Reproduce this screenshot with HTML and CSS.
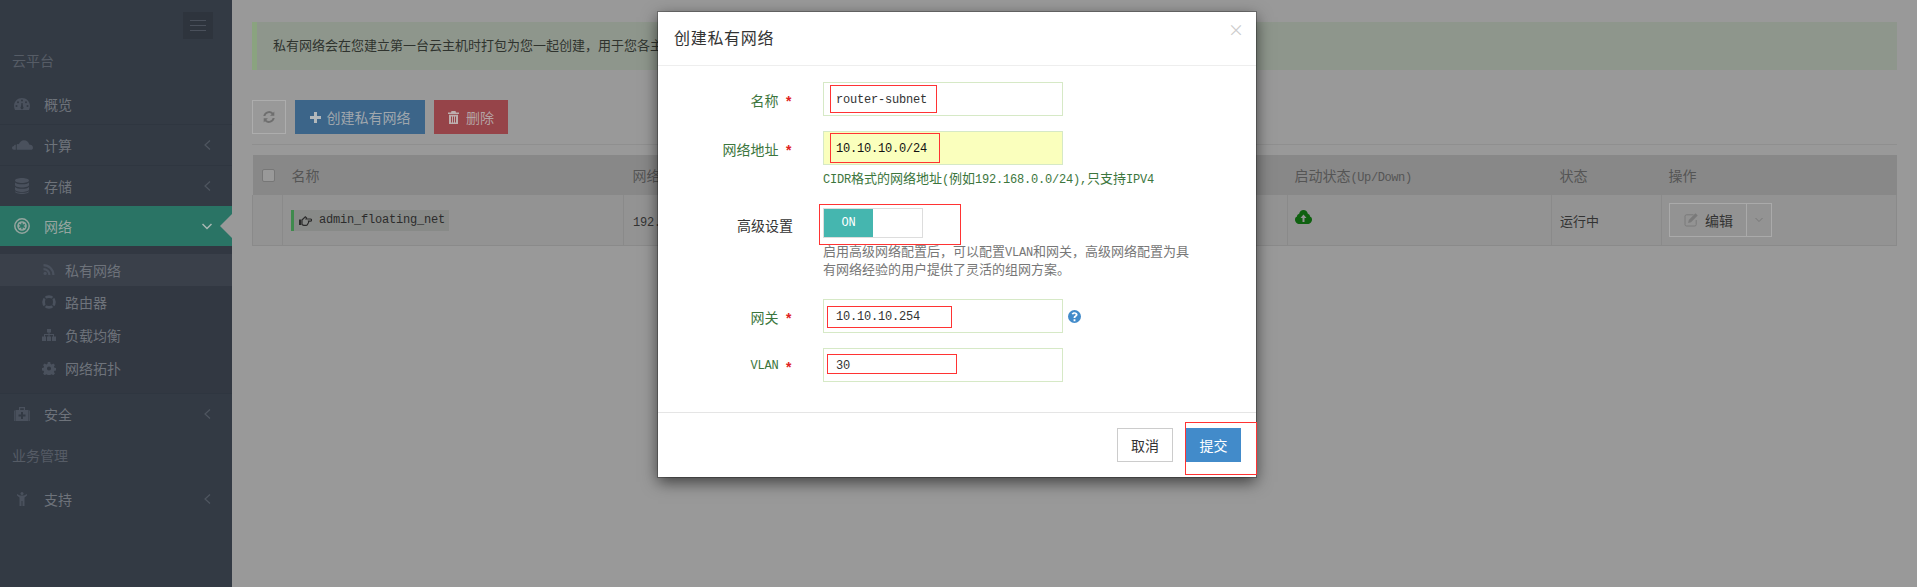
FILE: index.html
```html
<!DOCTYPE html>
<html lang="zh-CN">
<head>
<meta charset="UTF-8">
<meta name="viewport" content="width=device-width, initial-scale=1.0">
<title>创建私有网络</title>
<link rel="stylesheet" href="styles.css">
</head>
<body>

<svg class="defs" width="0" height="0">
  <symbol id="i-dash" viewBox="0 0 16 12"><path fill-rule="evenodd" d="M8 0C3.6 0 0 3.4 0 7.8c0 1.5.4 2.9 1 4.2h14c.6-1.3 1-2.700 1-4.200C16 3.400 12.400 0 8 0zM8 1.500a1 1 0 1 1 0 2 1 1 0 0 1 0-2zM4 3.200a1 1 0 1 1 0 2 1 1 0 0 1 0-2zM12 3.200a1 1 0 1 1 0 2 1 1 0 0 1 0-2zM2.500 7a1 1 0 1 1 0 2 1 1 0 0 1 0-2zM13.500 7a1 1 0 1 1 0 2 1 1 0 0 1 0-2zM7.400 5h1.200l.4 3.500a1.500 1.500 0 1 1-2 0z"/></symbol>
  <symbol id="i-cloud" viewBox="0 0 22 10"><path d="M2 10C.8 10 0 9.200 0 8s.8-2 2-2c.3-1 1-1.500 2-1.300V10zM5 10V4.500c.8-.6 1.500-.6 2.200-.2C8 1.800 10 0 12.500 0c3 0 5 2 5.500 4.500 2 0 4 1.200 4 3.300 0 1.400-1 2.200-2 2.200z"/></symbol>
  <symbol id="i-db" viewBox="0 0 14 16"><path d="M7 0C3.100 0 0 1 0 2.500S3.100 5 7 5s7-1 7-2.500S10.900 0 7 0zM0 4.500V7c0 1.500 3.100 2.500 7 2.500S14 8.500 14 7V4.500C13 5.800 10 6.300 7 6.300S1 5.800 0 4.500zM0 9v2.500C0 13 3.100 14 7 14s7-1 7-2.500V9c-1 1.300-4 1.800-7 1.800S1 10.300 0 9zM0 13.200v.3C0 15 3.100 16 7 16s7-1 7-2.500v-.3c-1.200 1-4 1.500-7 1.500s-5.800-.5-7-1.500z"/></symbol>
  <symbol id="i-net" viewBox="0 0 16 16"><circle cx="8" cy="8" r="7.200" fill="none" stroke="currentColor" stroke-width="1.500"/><circle cx="8" cy="8" r="4.800"/><path d="M8 4.800v6.400M5.200 6.400l5.600 3.200M10.800 6.400L5.200 9.600" stroke="#2a7465" stroke-width="1.400"/></symbol>
  <symbol id="i-rss" viewBox="0 0 11 11"><circle cx="1.600" cy="9.400" r="1.600"/><path d="M0 4v2.200A4.800 4.800 0 0 1 4.800 11H7A7 7 0 0 0 0 4zM0 0v2.200A8.800 8.800 0 0 1 8.800 11H11A11 11 0 0 0 0 0z"/></symbol>
  <symbol id="i-ring" viewBox="0 0 14 14"><circle cx="7" cy="7" r="5.400" fill="none" stroke="currentColor" stroke-width="2.800"/><path d="M1.500 1.500l3 3M12.500 1.500l-3 3M1.500 12.500l3-3M12.500 12.500l-3-3" stroke="#333a44" stroke-width="1.300"/></symbol>
  <symbol id="i-map" viewBox="0 0 14 12"><path d="M5 0h4v3.500H7.500v1.500H12v2.500h2V12h-4V7.500h1V6H7.500v1.500H9V12H5V7.500h1.500V6H3v1.500h1V12H0V7.500h2V5h4.500V3.500H5z"/></symbol>
  <symbol id="i-cog" viewBox="0 0 14 14"><path fill-rule="evenodd" d="M5.700 0h2.600l.3 2 1.300.6 1.700-1.100 1.800 1.800-1.100 1.700.6 1.300 2 .3v2.600l-2 .3-.6 1.300 1.100 1.700-1.800 1.800-1.700-1.100-1.300.6-.3 2H5.700l-.3-2-1.300-.6-1.700 1.100L.6 12.500l1.100-1.700-.6-1.300-2-.3V6.600l2-.3.6-1.300L.6 3.300l1.800-1.800 1.700 1.100 1.300-.6zM7 4.800a2.200 2.200 0 1 0 0 4.400 2.200 2.200 0 0 0 0-4.400z"/></symbol>
  <symbol id="i-med" viewBox="0 0 16 14"><path fill-rule="evenodd" d="M5 0h6v3h3.500v11h-13V3H5zM6.200 1.200V3h3.600V1.200zM7 5v2.500H4.500v2H7V12h2V9.500h2.500v-2H9V5zM0 3.500h.8V14H0zM15.200 3.500h.8V14h-.8z"/></symbol>
  <symbol id="i-man" viewBox="0 0 10 14"><circle cx="5" cy="1.500" r="1.500"/><path d="M0 2l3 1.500h4L10 2v1.500L7.500 5.500V14H5.500V9h-1v5H2.500V5.500L0 3.500z"/></symbol>
  <symbol id="i-sync" viewBox="0 0 14 14"><path d="M12.300 1.500v4.200H8.100l1.600-1.600A3.900 3.900 0 0 0 3.300 6H1.300a5.900 5.900 0 0 1 9.800-3.300zM1.700 12.500V8.300h4.200l-1.600 1.600A3.900 3.900 0 0 0 10.700 8h2a5.900 5.900 0 0 1-9.800 3.300z"/></symbol>
  <symbol id="i-plus" viewBox="0 0 11 11"><path d="M4 0h3v4h4v3H7v4H4V7H0V4h4z"/></symbol>
  <symbol id="i-trash" viewBox="0 0 11 13"><path fill-rule="evenodd" d="M3.500 0h4L8 1.500h3V3H0V1.500h3zM1 3.800h9V13H1zM3 5.500v6h1v-6zM5 5.500v6h1v-6zM7 5.500v6h1v-6z"/></symbol>
  <symbol id="i-hand" viewBox="0 0 13 11"><rect x="0" y="4.500" width="2.200" height="5.500"/><path d="M3 5l3.300-3.200 1.200 1.100L7 4h4.500a1.100 1.100 0 0 1 0 2.200h-2c.3 1-.1 2-.6 2.500-.2 1-.8 1.600-1.500 1.600H5c-1 0-1.500-.5-2-1z" fill="none" stroke="currentColor" stroke-width="1.200"/></symbol>
  <symbol id="i-up" viewBox="0 0 17 14"><path fill-rule="evenodd" d="M8.500 0C6.300 0 4.500 1.600 4.200 3.700 2.800 4 2 5.200 2 6.500c-1.200.4-2 1.500-2 2.900C0 11.900 2 14 4.500 14h8c2.500 0 4.500-2.100 4.500-4.600 0-1.400-.8-2.500-2-2.900 0-1.300-.8-2.500-2.200-2.800C12.500 1.600 10.700 0 8.500 0zM8.500 4.500l3 3.500H9.500v4h-2V8h-2z"/></symbol>
  <symbol id="i-edit" viewBox="0 0 14 14"><path d="M9.500 1.800H2.500A1.500 1.500 0 0 0 1 3.300v8.200A1.500 1.500 0 0 0 2.500 13h8.200a1.500 1.500 0 0 0 1.500-1.500V7" fill="none" stroke="currentColor"/><path d="M11.500.3l2.200 2.200-6.700 6.700-2.900.7.700-2.900z"/></symbol>
  <symbol id="i-help" viewBox="0 0 14 14"><path fill-rule="evenodd" d="M7 0a7 7 0 1 0 0 14A7 7 0 0 0 7 0zM6 10h2v2H6zM7 2.300c2 0 3.300 1.100 3.300 2.600 0 1.100-.6 1.700-1.300 2.200-.6.400-1 .7-1 1.400H6c0-1.300.6-1.900 1.300-2.400.5-.4.900-.6.900-1.100s-.5-.9-1.200-.9-1.300.4-1.600 1L3.800 3.900C4.400 3 5.500 2.300 7 2.300z"/></symbol>
</svg>

<div class="page">
  <aside class="sidebar">
    <div class="top-row"><button class="menu-btn"><i></i><i></i><i></i></button></div>
    <div class="sec-title">云平台</div>
    <div class="nav-item line"><svg class="ico" width="16" height="12"><use href="#i-dash"/></svg>概览</div>
    <div class="nav-item line"><svg class="ico wide" width="21" height="10"><use href="#i-cloud"/></svg>计算<svg class="chev" width="7" height="10"><polyline points="6,0.500 1,5 6,9.500"/></svg></div>
    <div class="nav-item"><svg class="ico" width="14" height="16"><use href="#i-db"/></svg>存储<svg class="chev" width="7" height="10"><polyline points="6,0.500 1,5 6,9.500"/></svg></div>
    <div class="nav-item active"><svg class="ico" width="16" height="16"><use href="#i-net"/></svg>网络<svg class="chev" width="10" height="7"><polyline points="0.500,1 5,5.500 9.500,1"/></svg><span class="arrow"></span></div>
    <div class="submenu">
      <div class="sub-item current"><svg class="sub-ico" width="11" height="11"><use href="#i-rss"/></svg>私有网络</div>
      <div class="sub-item"><svg class="sub-ico" width="14" height="14"><use href="#i-ring"/></svg>路由器</div>
      <div class="sub-item"><svg class="sub-ico" width="14" height="12"><use href="#i-map"/></svg>负载均衡</div>
      <div class="sub-item"><svg class="sub-ico" width="13" height="13"><use href="#i-cog"/></svg>网络拓扑</div>
    </div>
    <div class="nav-item top-line"><svg class="ico" width="16" height="14"><use href="#i-med"/></svg>安全<svg class="chev" width="7" height="10"><polyline points="6,0.500 1,5 6,9.500"/></svg></div>
    <div class="sec-title">业务管理</div>
    <div class="nav-item"><svg class="ico" width="10" height="14"><use href="#i-man"/></svg>支持<svg class="chev" width="7" height="10"><polyline points="6,0.500 1,5 6,9.500"/></svg></div>
  </aside>

  <main class="content">
    <div class="alert">私有网络会在您建立第一台云主机时打包为您一起创建&#xFF0C;用于您各主</div>
    <div class="toolbar">
      <button class="btn btn-plain"><svg width="14" height="14"><use href="#i-sync"/></svg></button>
      <button class="btn btn-blue"><svg width="11" height="11"><use href="#i-plus"/></svg>创建私有网络</button>
      <button class="btn btn-red"><svg width="11" height="13"><use href="#i-trash"/></svg>删除</button>
    </div>
    <table class="grid">
      <colgroup>
        <col class="c-check"><col class="c-name"><col class="c-addr"><col class="c-up"><col class="c-state"><col>
      </colgroup>
      <thead>
        <tr>
          <th><span class="check"></span></th>
          <th>名称</th>
          <th>网络地址</th>
          <th>启动状态<span class="m">(Up/Down)</span></th>
          <th>状态</th>
          <th>操作</th>
        </tr>
      </thead>
      <tbody>
        <tr>
          <td></td>
          <td><span class="name-tag"><svg width="13" height="11"><use href="#i-hand"/></svg><span class="m">admin_floating_net</span></span></td>
          <td><span class="m">192.168.1.0/24</span></td>
          <td><svg class="up-ico" width="17" height="14"><use href="#i-up"/></svg></td>
          <td>运行中</td>
          <td>
            <span class="edit-group">
              <span class="edit-main"><svg width="14" height="14"><use href="#i-edit"/></svg>编辑</span>
              <span class="edit-caret"><svg width="8" height="6"><polyline points="0.500,1 4,4.500 7.500,1"/></svg></span>
            </span>
          </td>
        </tr>
      </tbody>
    </table>
  </main>
</div>

<section class="modal">
  <header class="modal-head">
    <h4>创建私有网络</h4>
    <span class="close">×</span>
  </header>
  <div class="modal-body">
    <div class="row">
      <label class="lbl ok">名称<b>*</b></label>
      <div class="input m">router-subnet</div>
    </div>
    <div class="row">
      <label class="lbl ok">网络地址<b>*</b></label>
      <div>
        <div class="input autofill m">10.10.10.0/24</div>
        <p class="help ok"><span class="m">CIDR</span>格式的网络地址<span class="m">(</span>例如<span class="m">192.168.0.0/24),</span>只支持<span class="m">IPV4</span></p>
      </div>
    </div>
    <div class="row">
      <label class="lbl plain">高级设置</label>
      <div>
        <div class="switch"><span class="switch-on m">ON</span></div>
        <p class="help gray">启用高级网络配置后&#xFF0C;可以配置<span class="m">VLAN</span>和网关&#xFF0C;高级网络配置为具<br>有网络经验的用户提供了灵活的组网方案。</p>
      </div>
    </div>
    <div class="row">
      <label class="lbl ok">网关<b>*</b></label>
      <div class="input-wrap">
        <div class="input m">10.10.10.254</div>
        <svg class="help-ico" width="13" height="13"><use href="#i-help"/></svg>
      </div>
    </div>
    <div class="row last">
      <label class="lbl ok"><span class="m">VLAN</span><b>*</b></label>
      <div class="input m">30</div>
    </div>
  </div>
  <footer class="modal-foot">
    <button class="btn btn-cancel">取消</button>
    <button class="btn btn-submit">提交</button>
  </footer>

  <!-- red annotation boxes drawn on the screenshot -->
  <span class="mark mark-name"></span>
  <span class="mark mark-addr"></span>
  <span class="mark mark-switch"></span>
  <span class="mark mark-gw"></span>
  <span class="mark mark-vlan"></span>
  <span class="mark mark-submit"></span>
</section>

</body>
</html>
```

FILE: styles.css
```css
html, body {
    margin: 0;
    padding: 0;
    height: 100%;
    overflow: hidden;
    background: #999;
}

body {
    font-family: "Noto Sans CJK SC", "Noto Sans", sans-serif;
    font-size: 13px;
    color: #333;
    position: relative;
}

.defs {
    position: absolute;
}

/* latin text in the original is a narrow typewriter face */
.m {
    font-family: "Liberation Mono", "Noto Sans CJK SC", monospace;
    font-size: 12px;
    line-height: 1;
    letter-spacing: -0.2px;
}

button {
    font-family: inherit;
}

.page {
    display: flex;
    height: 100%;
}

/* sidebar */
.sidebar {
    width: 232px;
    flex: none;
    background: #333a44;
    color: #6e737b;
    font-size: 14px;
}

.top-row {
    height: 27px;
    padding: 12px 0 0 183px;
}

.menu-btn {
    display: flex;
    flex-direction: column;
    justify-content: center;
    gap: 4px;
    width: 30px;
    height: 27px;
    padding: 0 7px;
    border: none;
    background: #2e343d;
}

.menu-btn i {
    display: block;
    height: 1px;
    background: #4a505b;
}

.sec-title {
    height: 45px;
    line-height: 43px;
    padding-left: 12px;
    color: #565c66;
}

.nav-item {
    display: flex;
    align-items: center;
    position: relative;
    height: 39px;
    padding: 0 0 1px 14px;
}

.nav-item.line {
    border-bottom: 1px solid #2f3640;
}

.nav-item.top-line {
    border-top: 1px solid #2f3640;
}

.ico {
    width: 16px;
    margin-right: 14px;
    fill: #4a515d;
    color: #4a515d;
    overflow: visible;
}

.ico.wide {
    width: 21px;
    margin: 0 11px 0 -2px;
}

.chev {
    position: absolute;
    right: 21px;
    top: 15px;
    fill: none;
    stroke: #4f5660;
    stroke-width: 1.2;
}

.nav-item.active {
    background: #2a7465;
    color: #98a6a1;
}

.active .ico {
    fill: #95a59f;
    color: #95a59f;
}

.active .chev {
    top: 17px;
    right: 20px;
    stroke: #a9b8b3;
    stroke-width: 1.5;
}

.arrow {
    position: absolute;
    right: 0;
    top: 8px;
    border-style: solid;
    border-width: 12px 12px 12px 0;
    border-color: transparent #999 transparent transparent;
}

.submenu {
    padding: 8px 0;
    background: #323842;
}

.sub-item {
    display: flex;
    align-items: center;
    height: 32px;
    padding: 0 0 1px 42px;
}

.sub-item.current {
    height: 31px;
    background: #3a404a;
}

.sub-ico {
    width: 14px;
    margin-right: 9px;
    fill: #4a515d;
    color: #4a515d;
    overflow: visible;
}

/* page behind the dialog */
.content {
    flex: 1;
    padding: 22px 20px 0;
    min-width: 0;
}

.alert {
    height: 48px;
    line-height: 46px;
    padding-left: 16px;
    border-left: 5px solid #8aa37f;
    background: #8e968c;
    color: #2f332e;
    white-space: nowrap;
}

.toolbar {
    display: flex;
    gap: 9px;
    margin-top: 30px;
    padding-bottom: 10px;
    border-bottom: 1px solid #8f8f8f;
}

.btn {
    display: flex;
    align-items: center;
    justify-content: center;
    height: 34px;
    padding: 0;
    border: none;
    font-size: 14px;
}

.btn-plain {
    width: 34px;
    border: 1px solid #adadad;
    background: #999;
    fill: #6f6f6f;
}

.btn-blue {
    width: 130px;
    gap: 6px;
    background: #3c6589;
    color: #a0a7ad;
    fill: #b3b8bb;
}

.btn-red {
    width: 74px;
    gap: 7px;
    background: #964449;
    color: #b5a3a4;
    fill: #bdaeae;
}

.grid {
    width: 100%;
    margin-top: 10px;
    border-collapse: collapse;
    table-layout: fixed;
}

.c-check { width: 30px; }
.c-name { width: 341px; }
.c-addr { width: 664px; }
.c-up { width: 264px; }
.c-state { width: 110px; }

.grid th {
    height: 40px;
    padding: 0 0 0 9px;
    background: #888;
    color: #555;
    font-weight: normal;
    font-size: 14px;
    text-align: left;
}

.grid th .m {
    letter-spacing: -0.4px;
}

.grid td {
    height: 50px;
    padding: 0 0 0 9px;
    background: #939393;
    border: 1px solid #8a8a8a;
    border-top: none;
    vertical-align: middle;
}

.grid td:nth-child(2) {
    padding-left: 8px;
}

.grid th:nth-child(5),
.grid td:nth-child(5) {
    padding-left: 8px;
}

.grid th:nth-child(4),
.grid td:nth-child(4),
.grid th:nth-child(6),
.grid td:nth-child(6) {
    padding-left: 7px;
}

.check {
    display: block;
    width: 11px;
    height: 11px;
    border: 1px solid #777;
    border-radius: 2px;
    background: #999;
}

.name-tag {
    display: inline-flex;
    align-items: center;
    gap: 7px;
    width: 150px;
    height: 21px;
    padding-left: 5px;
    border-left: 3px solid #3f8a4d;
    background: #888a88;
    vertical-align: middle;
    fill: #2c2c2c;
    color: #2c2c2c;
    white-space: nowrap;
}

.up-ico {
    display: block;
    margin-bottom: 7px;
    fill: #0f6110;
}

.edit-group {
    display: inline-flex;
    height: 32px;
    border: 1px solid #aaa;
    vertical-align: middle;
}

.edit-main {
    display: flex;
    align-items: center;
    gap: 7px;
    width: 62px;
    padding-left: 14px;
    border-right: 1px solid #aaa;
    font-size: 14px;
    fill: #7a7a7a;
    color: #333;
}

.edit-main svg {
    color: #7a7a7a;
}

.edit-caret {
    display: flex;
    align-items: center;
    justify-content: center;
    width: 24px;
    fill: none;
    stroke: #777;
}

/* dialog */
.modal {
    position: absolute;
    left: 658px;
    top: 12px;
    width: 598px;
    height: 465px;
    background: #fff;
    box-shadow: 0 5px 15px rgba(0, 0, 0, 0.6), 0 0 0 1px rgba(0, 0, 0, 0.25);
}

.modal-head {
    display: flex;
    align-items: center;
    justify-content: space-between;
    height: 53px;
    padding: 0 16px;
    border-bottom: 1px solid #eee;
}

.modal-head h4 {
    margin: -3px 0 0;
    font-size: 16px;
    font-weight: normal;
    letter-spacing: 0.7px;
    color: #333;
}

.close {
    margin: -20px -4px 0 0;
    font-size: 16px;
    line-height: 1;
    color: #ccc;
}

.modal-body {
    padding: 16px 0 30px;
}

.row {
    display: grid;
    grid-template-columns: 135px 1fr;
    column-gap: 30px;
    margin-bottom: 15px;
}

.row:nth-child(2),
.row:nth-child(3) {
    margin-bottom: 21px;
}

.row.last {
    margin-bottom: 0;
}

.lbl {
    display: flex;
    justify-content: flex-end;
    height: 34px;
    font-size: 14px;
    line-height: 36px;
}

.lbl .m {
    font-size: 12px;
    line-height: 36px;
}

.lbl b {
    margin-left: 6px;
    font-family: "Liberation Mono", monospace;
    font-size: 14px;
    line-height: 42px;
    color: #e02222;
}

.lbl.plain {
    line-height: 34px;
}

.ok {
    color: #3c763d;
}

.input {
    box-sizing: border-box;
    width: 240px;
    height: 34px;
    line-height: 35px;
    padding-left: 12px;
    border: 1px solid #d6e9c6;
    background: #fff;
    color: #333;
}

.input.autofill {
    background: #faffbd;
    color: #111;
}

.input-wrap {
    display: flex;
    align-items: center;
    gap: 5px;
}

.help-ico {
    fill: #428bca;
}

.help {
    margin: 4px 0 0;
    font-size: 13px;
    line-height: 18px;
    white-space: nowrap;
}

.help.gray {
    color: #777;
}

.switch {
    box-sizing: border-box;
    width: 100px;
    height: 30px;
    border: 1px solid #ddd;
}

.switch-on {
    display: block;
    width: 49px;
    height: 28px;
    line-height: 28px;
    background: #45b6af;
    color: #fff;
    text-align: center;
}

.modal-foot {
    display: flex;
    justify-content: flex-end;
    gap: 13px;
    padding: 15px 15px 0;
    border-top: 1px solid #e5e5e5;
}

.btn-cancel {
    box-sizing: border-box;
    width: 56px;
    border: 1px solid #ccc;
    background: #fff;
    color: #333;
}

.btn-submit {
    width: 55px;
    background: #428bca;
    color: #fff;
}

/* annotation boxes */
.mark {
    position: absolute;
    box-sizing: border-box;
    border: 1px solid #f33;
    pointer-events: none;
}

.mark-name { left: 172px; top: 73px; width: 107px; height: 28px; }
.mark-addr { left: 172px; top: 121px; width: 110px; height: 30px; }
.mark-switch { left: 161px; top: 192px; width: 142px; height: 41px; }
.mark-gw { left: 169px; top: 294px; width: 125px; height: 22px; }
.mark-vlan { left: 169px; top: 342px; width: 130px; height: 20px; }
.mark-submit { left: 527px; top: 410px; width: 72px; height: 53px; }
```
